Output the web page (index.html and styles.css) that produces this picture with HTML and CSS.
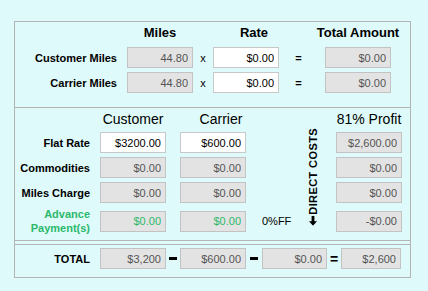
FILE: index.html
```html
<!DOCTYPE html>
<html lang="en">
<head>
    <meta charset="UTF-8">
    <meta name="viewport" content="width=device-width, initial-scale=1.0">
    <title>Load Calculator</title>
    <link rel="stylesheet" href="styles.css">
</head>
<body>
    <div class="calc">
        <div class="miles">
            <span></span>
            <h3 class="col-head">Miles</h3>
            <span></span>
            <h3 class="col-head shift">Rate</h3>
            <span></span>
            <h3 class="col-head">Total Amount</h3>

            <label class="row-label">Customer Miles</label>
            <input class="field" value="44.80" disabled>
            <span class="op">x</span>
            <input class="field editable" value="$0.00">
            <span class="op eq">=</span>
            <input class="field" value="$0.00" disabled>

            <label class="row-label">Carrier Miles</label>
            <input class="field" value="44.80" disabled>
            <span class="op">x</span>
            <input class="field editable" value="$0.00">
            <span class="op eq">=</span>
            <input class="field" value="$0.00" disabled>
        </div>

        <div class="costs">
            <span></span>
            <h4 class="sub-head">Customer</h4>
            <span></span>
            <h4 class="sub-head shift">Carrier</h4>
            <span></span>
            <span></span>
            <h4 class="sub-head">81% Profit</h4>

            <label class="row-label">Flat Rate</label>
            <input class="field editable" value="$3200.00">
            <span></span>
            <input class="field editable" value="$600.00">
            <span></span>
            <div class="direct">
                <svg class="arrow" width="8" height="10" viewBox="0 0 8 10"><polygon points="4,0 8,4.5 5.4,4.5 5.4,10 2.6,10 2.6,4.5 0,4.5" fill="#000"/></svg>DIRECT COSTS
            </div>
            <input class="field" value="$2,600.00" disabled>

            <label class="row-label">Commodities</label>
            <input class="field" value="$0.00" disabled>
            <span></span>
            <input class="field" value="$0.00" disabled>
            <span></span>
            <input class="field profit" value="$0.00" disabled>

            <label class="row-label">Miles Charge</label>
            <input class="field" value="$0.00" disabled>
            <span></span>
            <input class="field" value="$0.00" disabled>
            <span></span>
            <input class="field profit" value="$0.00" disabled>

            <label class="row-label green">Advance<br>Payment(s)</label>
            <input class="field green" value="$0.00" disabled>
            <span></span>
            <input class="field green" value="$0.00" disabled>
            <span class="ff">0%FF</span>
            <input class="field profit" value="-$0.00" disabled>
        </div>

        <div class="totals">
            <label class="row-label">TOTAL</label>
            <input class="field" value="$3,200" disabled>
            <span class="sign minus" title="minus"></span>
            <input class="field" value="$600.00" disabled>
            <span class="sign minus wide" title="minus"></span>
            <input class="field w65" value="$0.00" disabled>
            <span class="sign eq">=</span>
            <input class="field w60" value="$2,600" disabled>
        </div>
    </div>
</body>
</html>
```

FILE: styles.css
```css
* {
    box-sizing: border-box;
    margin: 0;
    padding: 0;
}

body {
    font-family: 'Liberation Sans', Arial, sans-serif;
    background: #dffafa;
    color: #000;
    padding: 21px 0 0 14px;
}

.calc {
    width: 397px;
    border: 1px solid #b4b4b4;
}

/* top block: miles x rate */
.miles {
    display: grid;
    grid-template-columns: 112px 66px 20px 66px 46px 66px;
    row-gap: 4px;
    align-items: center;
    padding: 3px 0 14px;
    border-bottom: 1px solid #b4b4b4;
}

.col-head {
    justify-self: center;
    font-size: 13px;
    line-height: 15px;
    font-weight: bold;
    white-space: nowrap;
    margin-bottom: 3px;
}

.shift {
    padding-left: 16px;
}

.row-label {
    font-size: 11px;
    font-weight: bold;
    line-height: 14px;
    text-align: right;
    padding-right: 10px;
}

.op {
    font-size: 11px;
    text-align: center;
}

.miles .eq {
    font-weight: bold;
    padding-right: 7px;
}

.field {
    display: block;
    width: 66px;
    height: 21px;
    border: 1px solid #c3c3c3;
    background: #e3e3e3;
    color: #545454;
    font-family: inherit;
    font-size: 11px;
    text-align: right;
    padding: 0 4px 0 2px;
    outline: none;
}

.field.editable {
    background: #fff;
    color: #000;
    border-color: #c8c8c8;
}

.field.green,
.row-label.green {
    color: #2bb96b;
}

/* middle block: customer / carrier / profit */
.costs {
    display: grid;
    grid-template-columns: 85px 66px 14px 66px 54px 36px 66px;
    row-gap: 4px;
    align-items: center;
    padding: 3px 0 5px;
    border-bottom: 1px solid #b4b4b4;
}

.sub-head {
    justify-self: center;
    font-size: 14px;
    font-weight: normal;
    line-height: 16px;
    white-space: nowrap;
    margin-bottom: 1px;
}

.costs .profit {
    grid-column: 7;
}

.direct {
    grid-column: 6;
    grid-row: 2 / 6;
    align-self: start;
    justify-self: start;
    margin: -4px 0 0 9px;
    writing-mode: vertical-rl;
    transform: rotate(180deg);
    font-size: 11px;
    font-weight: bold;
    line-height: 9px;
    letter-spacing: 0.4px;
    white-space: nowrap;
}

.arrow {
    margin-bottom: 1px;
}

.ff {
    font-size: 11px;
    padding-left: 16px;
}

/* bottom block: totals */
.totals {
    display: flex;
    align-items: center;
    margin-top: 3px;
    border-top: 1px solid #b4b4b4;
    padding: 3px 0 8px;
}

.totals .row-label {
    width: 85px;
}

.sign {
    display: flex;
    justify-content: center;
    width: 14px;
    font-size: 14px;
    font-weight: bold;
}

.minus::before {
    content: "";
    width: 8px;
    height: 3px;
    background: #000;
}

.minus.wide {
    width: 16px;
}

.w65 {
    width: 65px;
}

.w60 {
    width: 60px;
}
```
